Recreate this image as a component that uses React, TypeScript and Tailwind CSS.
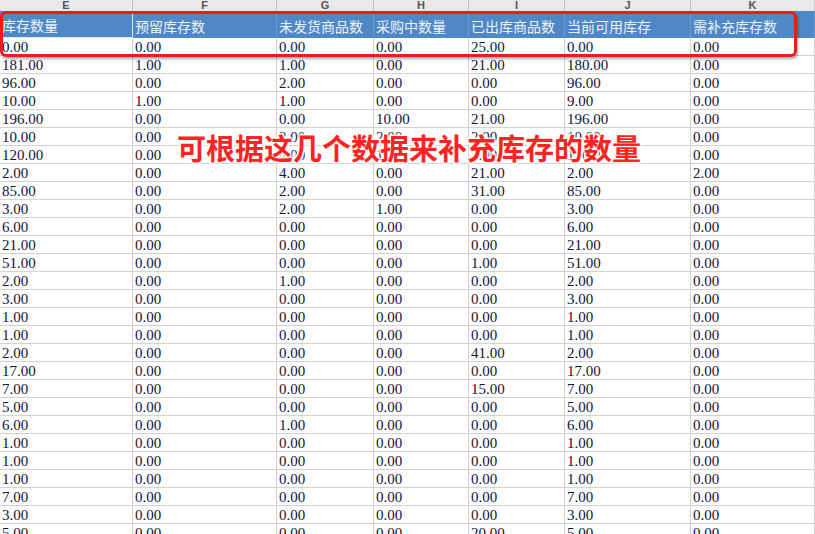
import React from "react"

const letters = ["E", "F", "G", "H", "I", "J", "K"]
const headers = ["库存数量", "预留库存数", "未发货商品数", "采购中数量", "已出库商品数", "当前可用库存", "需补充库存数"]

// E, F, G, H, I, J, K
const rows: string[][] = [
  ["0.00", "0.00", "0.00", "0.00", "25.00", "0.00", "0.00"],
  ["181.00", "1.00", "1.00", "0.00", "21.00", "180.00", "0.00"],
  ["96.00", "0.00", "2.00", "0.00", "0.00", "96.00", "0.00"],
  ["10.00", "1.00", "1.00", "0.00", "0.00", "9.00", "0.00"],
  ["196.00", "0.00", "0.00", "10.00", "21.00", "196.00", "0.00"],
  ["10.00", "0.00", "2.00", "2.00", "2.00", "10.00", "0.00"],
  ["120.00", "0.00", "4.00", "1.00", "2.00", "120.00", "0.00"],
  ["2.00", "0.00", "4.00", "0.00", "21.00", "2.00", "2.00"],
  ["85.00", "0.00", "2.00", "0.00", "31.00", "85.00", "0.00"],
  ["3.00", "0.00", "2.00", "1.00", "0.00", "3.00", "0.00"],
  ["6.00", "0.00", "0.00", "0.00", "0.00", "6.00", "0.00"],
  ["21.00", "0.00", "0.00", "0.00", "0.00", "21.00", "0.00"],
  ["51.00", "0.00", "0.00", "0.00", "1.00", "51.00", "0.00"],
  ["2.00", "0.00", "1.00", "0.00", "0.00", "2.00", "0.00"],
  ["3.00", "0.00", "0.00", "0.00", "0.00", "3.00", "0.00"],
  ["1.00", "0.00", "0.00", "0.00", "0.00", "1.00", "0.00"],
  ["1.00", "0.00", "0.00", "0.00", "0.00", "1.00", "0.00"],
  ["2.00", "0.00", "0.00", "0.00", "41.00", "2.00", "0.00"],
  ["17.00", "0.00", "0.00", "0.00", "0.00", "17.00", "0.00"],
  ["7.00", "0.00", "0.00", "0.00", "15.00", "7.00", "0.00"],
  ["5.00", "0.00", "0.00", "0.00", "0.00", "5.00", "0.00"],
  ["6.00", "0.00", "1.00", "0.00", "0.00", "6.00", "0.00"],
  ["1.00", "0.00", "0.00", "0.00", "0.00", "1.00", "0.00"],
  ["1.00", "0.00", "0.00", "0.00", "0.00", "1.00", "0.00"],
  ["1.00", "0.00", "0.00", "0.00", "0.00", "1.00", "0.00"],
  ["7.00", "0.00", "0.00", "0.00", "0.00", "7.00", "0.00"],
  ["3.00", "0.00", "0.00", "0.00", "0.00", "3.00", "0.00"],
  ["5.00", "0.00", "0.00", "0.00", "20.00", "5.00", "0.00"],
]

const grid = "grid grid-cols-[133px_144px_97px_95px_96px_126px_124px]"

export default function App() {
  return (
    <div className="relative w-[815px] h-[534px] overflow-hidden bg-white">
      {/* column letters */}
      <div className={`${grid} h-[11px] bg-[#e9e9e9]`}>
        {letters.map((l) => (
          <div
            key={l}
            className="flex items-center justify-center border-r border-[#c6c6c6] text-[11px] leading-[11px] font-bold text-[#555] font-['Liberation_Sans',sans-serif] overflow-hidden"
          >
            {l}
          </div>
        ))}
      </div>

      {/* header row */}
      <div className={`${grid} h-[27px] bg-[#4f88c6]`}>
        {headers.map((h, i) => (
          <div
            key={h}
            className={`flex items-center pl-[2px] pt-[3px] text-[14px] text-[#eef3fa] font-['Noto_Sans_CJK_SC',sans-serif] whitespace-nowrap border-r ${
              i === 0 ? "border-[#dfe9f5] border-b" : "border-[#6a9ad0]"
            }`}
          >
            {h}
          </div>
        ))}
      </div>

      {/* data rows */}
      {rows.map((r, ri) => (
        <div key={ri} className={`${grid} h-[18px]`}>
          {r.map((v, ci) => (
            <div
              key={ci}
              className="flex items-center pl-[2px] pt-[1px] border-r border-b border-[#d2d2d2] text-[15px] leading-[17px] text-[#14143a] font-['Liberation_Serif',serif] whitespace-nowrap overflow-hidden"
            >
              {v}
            </div>
          ))}
        </div>
      ))}

      {/* red highlight box */}
      <div className="absolute left-0 top-[11px] w-[797px] h-[46px] border-[3px] border-[#ec1c1c] rounded-[6px] shadow-[1px_2px_3px_rgba(0,0,0,0.35)]" />

      {/* annotation */}
      <div className="absolute left-[177px] top-[129px] text-[29px] leading-[37px] font-bold text-[#ff2424] whitespace-nowrap font-['Noto_Sans_CJK_SC',sans-serif] [text-shadow:0_0_2px_#fff,0_0_2px_#fff,1px_1px_1px_#fff,-1px_-1px_1px_#fff,1px_-1px_1px_#fff,-1px_1px_1px_#fff,0_0_4px_#fff]">
        可根据这几个数据来补充库存的数量
      </div>
    </div>
  )
}
